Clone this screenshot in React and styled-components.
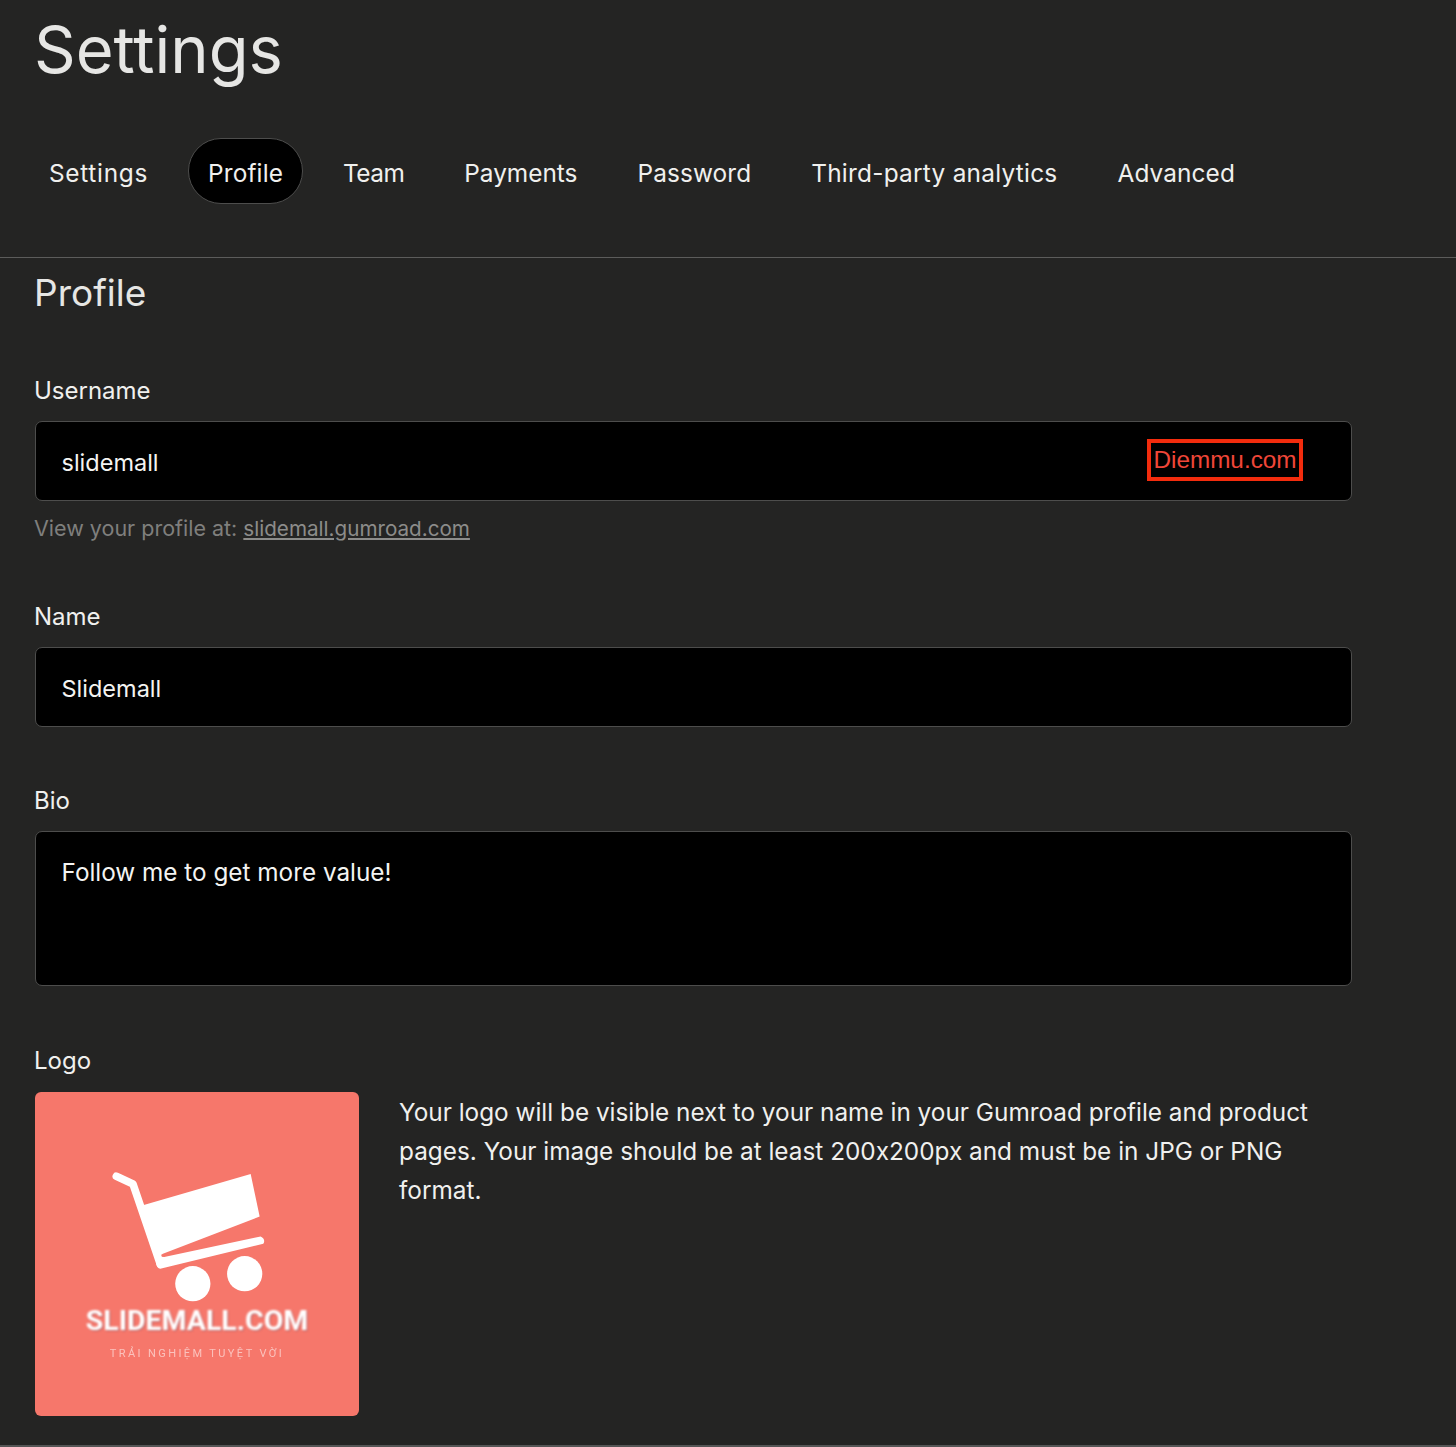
import React from "react";
import styled, { createGlobalStyle } from "styled-components";

const GlobalStyle = createGlobalStyle`
  * {
    box-sizing: border-box;
  }
  body {
    margin: 0;
    background: #242423;
    color: #f0f0ee;
    font-family: "Inter", "Liberation Sans", sans-serif;
    font-feature-settings: "calt" 0;
  }
`;

// track evens out the width difference to the original typeface
const tabs = [
  { label: "Settings", track: 0.7 },
  { label: "Profile", track: 0.15 },
  { label: "Team", track: -0.55 },
  { label: "Payments", track: 0 },
  { label: "Password", track: 0.1 },
  { label: "Third-party analytics", track: 0.25 },
  { label: "Advanced", track: 0.1 },
];

const App = () => {
  return (
    <Page>
      <GlobalStyle />
      <Header>
        <Title>Settings</Title>
        <Tabs>
          {tabs.map((tab) => (
            <Tab key={tab.label} href="#" $active={tab.label === "Profile"} $track={tab.track}>
              {tab.label}
            </Tab>
          ))}
        </Tabs>
      </Header>

      <Content>
        <SectionTitle>Profile</SectionTitle>

        <Field $gap={60}>
          <Label>Username</Label>
          <InputWrap>
            <TextInput defaultValue="slidemall" readOnly />
            <Watermark>Diemmu.com</Watermark>
          </InputWrap>
          <Help>
            View your profile at: <HelpLink href="#">slidemall.gumroad.com</HelpLink>
          </Help>
        </Field>

        <Field $gap={58}>
          <Label>Name</Label>
          <TextInput defaultValue="Slidemall" readOnly />
        </Field>

        <Field $gap={59}>
          <Label>Bio</Label>
          <Bio defaultValue="Follow me to get more value!" readOnly />
        </Field>

        <Field $gap={60}>
          <Label>Logo</Label>
          <LogoRow>
            <LogoTile>
              <CartIcon />
              <LogoName>SLIDEMALL.COM</LogoName>
              <LogoTagline>TRẢI NGHIỆM TUYỆT VỜI</LogoTagline>
            </LogoTile>
            <LogoNote>
              Your logo will be visible next to your name in your Gumroad profile and product pages. Your image should
              be at least 200x200px and must be in JPG or PNG format.
            </LogoNote>
          </LogoRow>
        </Field>
      </Content>
    </Page>
  );
};

const CartIcon = () => (
  <CartSvg viewBox="270 270 470 400" width="157" height="133" aria-hidden="true">
    <path d="M288 289 L338 312 L420 553" fill="none" stroke="#fff" strokeWidth="23" strokeLinecap="round" strokeLinejoin="round" />
    <path d="M368 376 L692 282 L719 410 L428 522 L415 530 Z" fill="#fff" />
    <path d="M412 530 L432 532 L722 470 Q738 478 730 492 L420 567 Q410 565 408 552 Z" fill="#fff" />
    <circle cx="518" cy="612" r="53" fill="#fff" />
    <circle cx="674" cy="582" r="53" fill="#fff" />
  </CartSvg>
);

export default App;

const Page = styled.div`
  width: 1456px;
  height: 1447px;
  overflow: hidden;
  border-bottom: 2px solid #555;
`;

const Header = styled.header`
  height: 258px;
  padding-top: 11px;
  border-bottom: 1px solid #5c5c5b;
`;

const Title = styled.h1`
  margin: 0 0 50px 34px;
  height: 77px;
  font-size: 65px;
  line-height: 77px;
  font-weight: 400;
  color: #e6e6e4;
`;

const Tabs = styled.nav`
  display: flex;
  gap: 20px;
  padding-left: 29px;
`;

const Tab = styled.a`
  display: flex;
  align-items: center;
  height: 66px;
  padding: 3px 19px 0;
  border: 1px solid ${(p) => (p.$active ? "#4d4d4c" : "transparent")};
  border-radius: 33px;
  background: ${(p) => (p.$active ? "#000" : "transparent")};
  color: #f0f0ee;
  font-size: 24.4px;
  letter-spacing: ${(p) => p.$track}px;
  text-decoration: none;
`;

const Content = styled.main`
  padding: 0 0 0 35px;
  width: 1352px;
`;

const SectionTitle = styled.h2`
  margin: 12px 0 0 -1px;
  height: 46px;
  font-size: 37px;
  line-height: 46px;
  font-weight: 400;
  color: #e6e6e4;
`;

const Field = styled.section`
  margin-top: ${(p) => p.$gap}px;
`;

const Label = styled.label`
  display: block;
  height: 30px;
  margin: 0 0 15px -1px;
  font-size: 24px;
  line-height: 30px;
  color: #f0f0ee;
`;

const InputWrap = styled.div`
  position: relative;
`;

const TextInput = styled.input`
  display: block;
  width: 100%;
  height: 80px;
  padding: 2px 26px 0 25.5px;
  border: 1px solid #4d4d4c;
  border-radius: 7px;
  background: #000;
  color: #f4f4f2;
  font: 400 23.5px "Inter", "Liberation Sans", sans-serif;
  outline: none;
`;

const Bio = styled.textarea`
  display: block;
  width: 100%;
  height: 155px;
  padding: 24px 26px 24px 25.5px;
  border: 1px solid #4d4d4c;
  border-radius: 7px;
  background: #000;
  color: #f4f4f2;
  font: 400 24.3px/32px "Inter", "Liberation Sans", sans-serif;
  outline: none;
  resize: none;
`;

const Watermark = styled.span`
  position: absolute;
  top: 18px;
  right: 49px;
  height: 42px;
  width: 156px;
  border: 4px solid #f32c0d;
  color: #ef4638;
  font-family: "Liberation Sans", Arial, sans-serif;
  font-size: 24.3px;
  line-height: 34px;
  text-align: center;
`;

const Help = styled.p`
  margin: 12px 0 0 -1px;
  font-size: 21.5px;
  line-height: 30px;
  color: #7f7f7d;
`;

const HelpLink = styled.a`
  font-size: 20.65px;
  color: #8c8c8a;
  text-decoration: underline;
`;

const LogoRow = styled.div`
  display: flex;
  gap: 40px;
  align-items: flex-start;
  margin-top: 16px;
`;

const LogoTile = styled.div`
  flex: none;
  display: flex;
  flex-direction: column;
  align-items: center;
  width: 324px;
  height: 324px;
  padding-top: 78px;
  border-radius: 6px;
  background: #f6776b;
  overflow: hidden;
`;

const CartSvg = styled.svg`
  display: block;
  align-self: flex-start;
  margin-left: 75px;
  filter: blur(0.5px);
`;

const LogoName = styled.span`
  margin-top: 2px;
  font-family: "Roboto", "Liberation Sans", sans-serif;
  font-size: 28.5px;
  line-height: 32px;
  font-weight: 700;
  color: #fff;
  text-shadow: 1px 1px 1px rgba(120, 90, 110, 0.5);
  filter: blur(0.8px);
`;

const LogoTagline = styled.span`
  margin-top: 10px;
  font-family: "Roboto", "Liberation Sans", sans-serif;
  font-size: 11px;
  line-height: 14px;
  letter-spacing: 2.4px;
  color: rgba(255, 255, 255, 0.55);
  filter: blur(0.5px);
`;

const LogoNote = styled.p`
  margin: 1px 0 0;
  width: 920px;
  font-size: 24.35px;
  line-height: 39px;
  color: #f0f0ee;
`;
